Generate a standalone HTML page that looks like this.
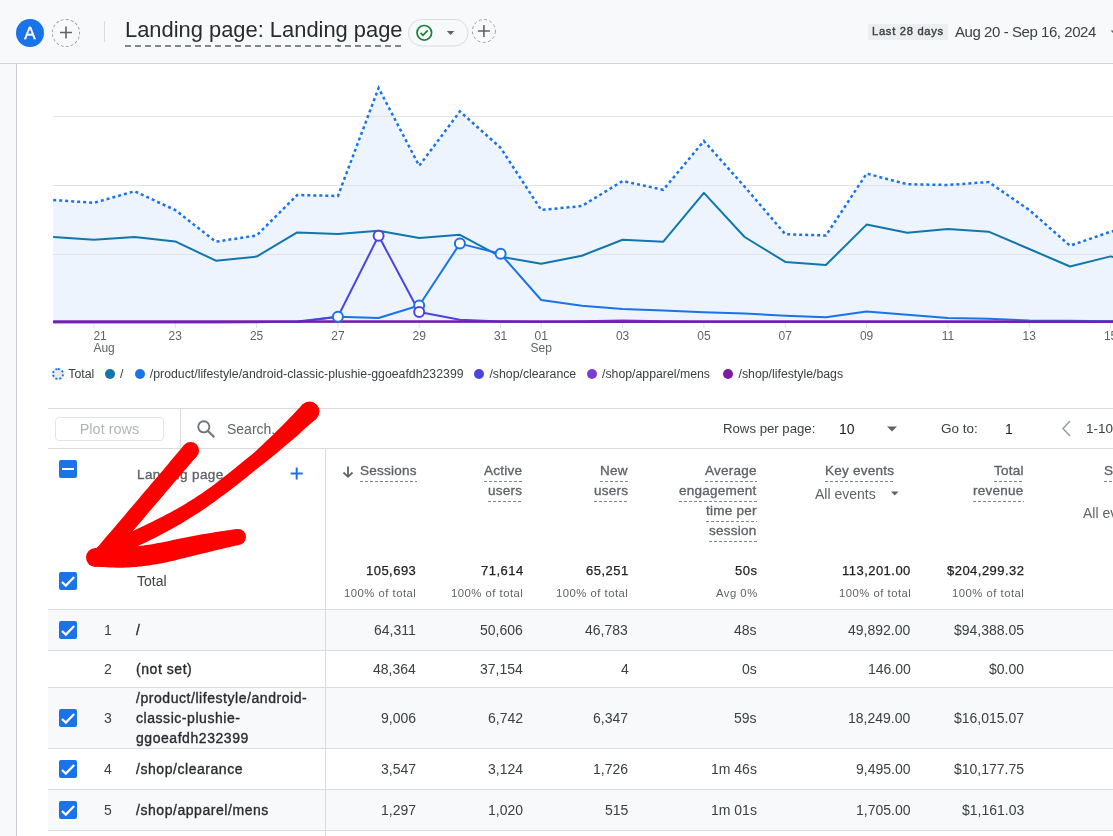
<!DOCTYPE html>
<html><head><meta charset="utf-8">
<style>
*{box-sizing:border-box;margin:0;padding:0}
html,body{width:1113px;height:836px;overflow:hidden;background:#fff;font-family:"Liberation Sans",sans-serif;color:#3c4043}
.a{position:absolute;white-space:nowrap;will-change:transform}
#hdr{position:absolute;left:0;top:0;width:1113px;height:64px;background:#f8f9fa;border-bottom:1px solid #d3d5d9}
#strip{position:absolute;left:0;top:64px;width:17px;height:772px;background:#f8f9fa;border-right:1px solid #c9ccd0}
.xl{position:absolute;width:60px;font-size:12px;line-height:12px;color:#5f6368}
.xl.c{text-align:center}
.lg{position:absolute;font-size:12.3px;line-height:14px;top:367px;color:#3c4043;white-space:nowrap}
.dot{position:absolute;width:10px;height:10px;border-radius:50%;top:369px}
.hd{position:absolute;font-size:13.2px;font-weight:bold;color:#5f6368;line-height:20px;text-align:right;white-space:nowrap}
.u{height:22px;background-image:linear-gradient(to right,#80868b 60%,transparent 60%);background-size:5px 1px;background-repeat:repeat-x;background-position:0 20px;}
.num{position:absolute;font-size:14px;line-height:20px;text-align:right;white-space:nowrap;color:#202124}
.sub{position:absolute;font-size:12px;line-height:16px;text-align:right;white-space:nowrap;color:#5f6368}
.cb{position:absolute;width:18px;height:18px;background:#1a73e8;border-radius:2px;left:59px}
.row{position:absolute;left:48px;width:1065px;border-bottom:1px solid #dadce0}
.m{-webkit-text-stroke:0.35px currentColor}
.pg{position:absolute;left:136px;font-size:14px;line-height:20px;font-weight:bold;color:#3c4043;white-space:nowrap}
.rn{position:absolute;width:30px;left:81px;text-align:right;font-size:14px;line-height:20px;color:#3c4043}
</style></head><body>
<div id="hdr"></div>
<div id="strip"></div>

<!-- header contents -->
<div class="a" style="left:16px;top:19px;width:28px;height:28px;border-radius:50%;background:#1a73e8;color:#fff;font-size:17px;line-height:29px;text-align:center;-webkit-text-stroke:0.4px #fff">A</div>
<div class="a" style="left:52px;top:18.5px;width:28px;height:28px;border-radius:50%;border:1px dashed #9aa0a6"></div>
<svg class="a" style="left:0;top:0" width="1113" height="64">
 <path d="M66,26.5 V38.5 M60,32.5 H72" stroke="#5f6368" stroke-width="1.6"/>
 <line x1="104.5" y1="21" x2="104.5" y2="42" stroke="#dadce0" stroke-width="1"/>
 <line x1="125" y1="46" x2="403" y2="46" stroke="#80868b" stroke-width="2" stroke-dasharray="6 4"/>
 <rect x="408.5" y="19.5" width="59.5" height="26.5" rx="13.25" fill="none" stroke="#dadce0"/>
 <circle cx="424.3" cy="32.8" r="7.3" fill="none" stroke="#188038" stroke-width="1.7"/>
 <path d="M420.5,32.8 L423,35.3 L427.7,30.4" fill="none" stroke="#188038" stroke-width="1.7"/>
 <path d="M446.8,31 L454.4,31 L450.6,35 Z" fill="#5f6368"/>
 <circle cx="483.9" cy="31" r="11.5" fill="none" stroke="#9aa0a6" stroke-dasharray="3 2.4"/>
 <path d="M483.9,25 V37 M477.9,31 H489.9" stroke="#5f6368" stroke-width="1.6"/>
 <path d="M1110.5,30.5 L1118.5,30.5 L1114.5,34.5 Z" fill="#5f6368"/>
</svg>
<div class="a" style="left:125px;top:17.1px;font-size:21.9px;line-height:26px;color:#2a2b2e">Landing page: Landing page</div>
<div class="a" style="left:868px;top:24px;width:79.5px;height:16px;background:#eceef0;border-radius:2px"></div>
<div class="a" style="left:872.4px;top:25px;font-size:11.2px;letter-spacing:0.7px;line-height:14px;color:#3c4043;top:23.6px;-webkit-text-stroke:0.4px #3c4043">Last 28 days</div>
<div class="a" style="left:954.7px;top:22px;font-size:15px;letter-spacing:-0.44px;line-height:20px;color:#3c4043">Aug 20 - Sep 16, 2024</div>

<!-- chart -->
<svg class="a" style="left:0;top:0" width="1113" height="400">
<path d="M53.2,322 L53.2,200.0 L93.9,202.8 L134.5,191.3 L175.2,210.0 L215.9,241.7 L256.6,235.5 L297.2,195.0 L337.9,196.0 L378.6,88.0 L419.2,165.8 L459.9,111.4 L500.6,147.8 L541.2,210.0 L581.9,206.0 L622.6,181.0 L663.3,189.8 L703.9,141.0 L744.6,186.6 L785.3,234.2 L825.9,235.5 L866.6,173.6 L907.3,184.2 L947.9,185.0 L988.6,182.0 L1029.3,210.0 L1070.0,245.7 L1110.6,231.7 L1151.3,222.0 L1151.3,322 Z" fill="#edf4fe"/>
<line x1="53" y1="116.5" x2="1113" y2="116.5" stroke="#e3e3e3" stroke-width="1"/>
<line x1="53" y1="185.5" x2="1113" y2="185.5" stroke="#e3e3e3" stroke-width="1"/>
<line x1="53" y1="254.5" x2="1113" y2="254.5" stroke="#e3e3e3" stroke-width="1"/>
<line x1="93.9" y1="323" x2="93.9" y2="328" stroke="#e0e0e0" stroke-width="1"/>
<line x1="175.2" y1="323" x2="175.2" y2="328" stroke="#e0e0e0" stroke-width="1"/>
<line x1="256.6" y1="323" x2="256.6" y2="328" stroke="#e0e0e0" stroke-width="1"/>
<line x1="337.9" y1="323" x2="337.9" y2="328" stroke="#e0e0e0" stroke-width="1"/>
<line x1="419.2" y1="323" x2="419.2" y2="328" stroke="#e0e0e0" stroke-width="1"/>
<line x1="500.6" y1="323" x2="500.6" y2="328" stroke="#e0e0e0" stroke-width="1"/>
<line x1="541.2" y1="323" x2="541.2" y2="328" stroke="#e0e0e0" stroke-width="1"/>
<line x1="622.6" y1="323" x2="622.6" y2="328" stroke="#e0e0e0" stroke-width="1"/>
<line x1="703.9" y1="323" x2="703.9" y2="328" stroke="#e0e0e0" stroke-width="1"/>
<line x1="785.3" y1="323" x2="785.3" y2="328" stroke="#e0e0e0" stroke-width="1"/>
<line x1="866.6" y1="323" x2="866.6" y2="328" stroke="#e0e0e0" stroke-width="1"/>
<line x1="947.9" y1="323" x2="947.9" y2="328" stroke="#e0e0e0" stroke-width="1"/>
<line x1="1029.3" y1="323" x2="1029.3" y2="328" stroke="#e0e0e0" stroke-width="1"/>
<line x1="1110.6" y1="323" x2="1110.6" y2="328" stroke="#e0e0e0" stroke-width="1"/>
<polyline points="53.2,321.6 93.9,321.6 134.5,321.6 175.2,321.6 215.9,321.6 256.6,321.6 297.2,321.6 337.9,321.6 378.6,321.6 419.2,321.6 459.9,321.6 500.6,321.6 541.2,321.6 581.9,321.2 622.6,320.6 663.3,321.2 703.9,321.6 744.6,321.6 785.3,321.6 825.9,321.6 866.6,321.6 907.3,321.6 947.9,321.6 988.6,321.6 1029.3,321.6 1070.0,321.6 1110.6,321.6 1151.3,321.6" fill="none" stroke="#7a3ad6" stroke-width="2"/>
<polyline points="53.2,237.0 93.9,239.8 134.5,237.0 175.2,241.4 215.9,260.7 256.6,256.6 297.2,232.4 337.9,234.0 378.6,230.8 419.2,238.0 459.9,234.8 500.6,256.6 541.2,263.8 581.9,255.7 622.6,239.8 663.3,241.7 703.9,192.9 744.6,237.0 785.3,261.9 825.9,265.0 866.6,224.6 907.3,232.7 947.9,229.0 988.6,231.7 1029.3,249.0 1070.0,266.5 1110.6,256.4 1151.3,266.0" fill="none" stroke="#1176ac" stroke-width="2" stroke-linejoin="round"/>
<polyline points="53.2,322.5 93.9,322.5 134.5,322.5 175.2,322.5 215.9,322.5 256.6,322.3 297.2,321.5 337.9,316.7 378.6,318.0 419.2,305.5 459.9,243.6 500.6,253.8 541.2,300.0 581.9,305.8 622.6,308.9 663.3,310.4 703.9,312.2 744.6,313.5 785.3,315.7 825.9,317.3 866.6,311.4 907.3,314.8 947.9,318.0 988.6,318.8 1029.3,320.4 1070.0,320.8 1110.6,321.2 1151.3,321.5" fill="none" stroke="#1a73e8" stroke-width="2" stroke-linejoin="round"/>
<polyline points="53.2,322.0 93.9,322.0 134.5,322.0 175.2,322.0 215.9,322.0 256.6,322.0 297.2,322.0 337.9,316.7 378.6,235.8 419.2,312.0 459.9,319.8 500.6,321.5 541.2,322.0 581.9,322.0 622.6,322.0 663.3,322.0 703.9,322.0 744.6,322.0 785.3,322.0 825.9,322.0 866.6,322.0 907.3,322.0 947.9,322.0 988.6,322.0 1029.3,322.0 1070.0,322.0 1110.6,322.0 1151.3,322.0" fill="none" stroke="#4b44e0" stroke-width="2" stroke-linejoin="round"/>
<polyline points="53.2,321.7 93.9,321.7 134.5,321.7 175.2,321.7 215.9,321.7 256.6,321.7 297.2,321.7 337.9,321.7 378.6,321.7 419.2,321.7 459.9,321.7 500.6,321.7 541.2,321.7 581.9,321.7 622.6,321.7 663.3,321.7 703.9,321.7 744.6,321.7 785.3,321.7 825.9,321.7 866.6,321.7 907.3,321.7 947.9,321.7 988.6,321.7 1029.3,321.7 1070.0,321.7 1110.6,321.7 1151.3,321.7" fill="none" stroke="#7d1aa0" stroke-width="2.2"/>
<polyline points="53.2,200.0 93.9,202.8 134.5,191.3 175.2,210.0 215.9,241.7 256.6,235.5 297.2,195.0 337.9,196.0 378.6,88.0 419.2,165.8 459.9,111.4 500.6,147.8 541.2,210.0 581.9,206.0 622.6,181.0 663.3,189.8 703.9,141.0 744.6,186.6 785.3,234.2 825.9,235.5 866.6,173.6 907.3,184.2 947.9,185.0 988.6,182.0 1029.3,210.0 1070.0,245.7 1110.6,231.7 1151.3,222.0" fill="none" stroke="#1a73e8" stroke-width="2.5" stroke-dasharray="3 3"/>
<circle cx="337.9" cy="316.7" r="5" fill="#fff" stroke="#1a73e8" stroke-width="2"/>
<circle cx="419.2" cy="305.5" r="5" fill="#fff" stroke="#1a73e8" stroke-width="2"/>
<circle cx="459.9" cy="243.6" r="5" fill="#fff" stroke="#1a73e8" stroke-width="2"/>
<circle cx="500.6" cy="253.8" r="5" fill="#fff" stroke="#1a73e8" stroke-width="2"/>
<circle cx="378.6" cy="235.8" r="5" fill="#fff" stroke="#4b44e0" stroke-width="2"/>
<circle cx="419.2" cy="312" r="5" fill="#fff" stroke="#4b44e0" stroke-width="2"/>
</svg>
<div class="xl" style="left:93.4px;top:329.5px;text-align:left">21<br>Aug</div>
<div class="xl c" style="left:145.2px;top:329.5px">23</div>
<div class="xl c" style="left:226.6px;top:329.5px">25</div>
<div class="xl c" style="left:307.9px;top:329.5px">27</div>
<div class="xl c" style="left:389.2px;top:329.5px">29</div>
<div class="xl c" style="left:470.6px;top:329.5px">31</div>
<div class="xl c" style="left:511.2px;top:329.5px">01<br>Sep</div>
<div class="xl c" style="left:592.6px;top:329.5px">03</div>
<div class="xl c" style="left:673.9px;top:329.5px">05</div>
<div class="xl c" style="left:755.3px;top:329.5px">07</div>
<div class="xl c" style="left:836.6px;top:329.5px">09</div>
<div class="xl c" style="left:917.9px;top:329.5px">11</div>
<div class="xl c" style="left:999.3px;top:329.5px">13</div>
<div class="xl c" style="left:1080.6px;top:329.5px">15</div>

<!-- legend -->
<div class="a" style="left:52px;top:368px;width:12px;height:12px;border-radius:50%;border:2px dotted #1a73e8;background:#e8eaed"></div>
<div class="lg" style="left:68.3px">Total</div>
<div class="dot" style="left:105px;background:#1176ac"></div>
<div class="lg" style="left:120px">/</div>
<div class="dot" style="left:135px;background:#1a73e8"></div>
<div class="lg" style="left:149.8px">/product/lifestyle/android-classic-plushie-ggoeafdh232399</div>
<div class="dot" style="left:474px;background:#4b44e0"></div>
<div class="lg" style="left:489.4px">/shop/clearance</div>
<div class="dot" style="left:587px;background:#7a3ad6"></div>
<div class="lg" style="left:602px">/shop/apparel/mens</div>
<div class="dot" style="left:723px;background:#7d1aa0"></div>
<div class="lg" style="left:738.5px">/shop/lifestyle/bags</div>

<!-- table toolbar -->
<div class="a" style="left:48px;top:408px;width:1065px;height:41px;border-top:1px solid #dadce0;border-bottom:1px solid #dadce0"></div>
<div class="a" style="left:54.5px;top:417px;width:109px;height:23.5px;border:1px solid #e3e5e8;border-radius:4px"></div>
<div class="a" style="left:54.5px;top:419px;width:109px;text-align:center;font-size:14.5px;line-height:20px;color:#b0b4b9">Plot rows</div>
<div class="a" style="left:180px;top:408px;width:1px;height:41px;background:#dadce0"></div>
<svg class="a" style="left:190px;top:412px" width="34" height="34">
 <circle cx="13.8" cy="14.8" r="5.6" fill="none" stroke="#70757a" stroke-width="1.9"/>
 <line x1="18" y1="19" x2="24.3" y2="25.3" stroke="#70757a" stroke-width="2"/>
</svg>
<div class="a" style="left:227px;top:419px;font-size:14px;line-height:20px;color:#5f6368">Search...</div>
<div class="a" style="left:723px;top:419px;font-size:13.2px;line-height:20px;color:#3c4043">Rows per page:</div>
<div class="a" style="left:839px;top:419px;font-size:14px;line-height:20px;color:#202124">10</div>
<svg class="a" style="left:880px;top:420px" width="20" height="20"><path d="M7,6.5 L17,6.5 L12,11.5 Z" fill="#5f6368"/></svg>
<div class="a" style="left:941px;top:419px;font-size:13.5px;line-height:20px;color:#3c4043">Go to:</div>
<div class="a" style="left:1005px;top:419px;font-size:14px;line-height:20px;color:#202124">1</div>
<svg class="a" style="left:1055px;top:418px" width="20" height="22"><path d="M15,3 L8,10.5 L15,18" fill="none" stroke="#9aa0a6" stroke-width="1.6"/></svg>
<div class="a" style="left:1085.7px;top:419px;font-size:13.5px;line-height:20px;color:#3c4043">1-10</div>

<!-- table header -->
<div class="cb" style="top:460px"><div style="position:absolute;left:3px;top:8px;width:12px;height:2px;background:#fff"></div></div>
<div class="a m" style="left:137px;top:465px;font-size:13.5px;line-height:20px;letter-spacing:0.4px;color:#5f6368">Landing page</div>
<svg class="a" style="left:288px;top:465px" width="18" height="18"><path d="M8.7,2.5 V14.5 M2.7,8.5 H14.7" stroke="#1a73e8" stroke-width="2"/></svg>

<svg class="a" style="left:340px;top:464.5px" width="16" height="14"><path d="M8,1.5 V11.5 M3.5,7.5 L8,11.8 L12.5,7.5" fill="none" stroke="#5f6368" stroke-width="1.8"/></svg>
<div class="a hl u m" style="right:696.7px;top:461.02px;font-size:13.5px;line-height:20px;font-weight:normal;color:#5f6368;letter-spacing:0.25px">Sessions</div>
<div class="a hl u m" style="right:590.7px;top:461.02px;font-size:13.5px;line-height:20px;font-weight:normal;color:#5f6368;letter-spacing:0.25px">Active</div>
<div class="a hl u m" style="right:590.7px;top:480.82px;font-size:13.5px;line-height:20px;font-weight:normal;color:#5f6368;letter-spacing:0.25px">users</div>
<div class="a hl u m" style="right:485.0px;top:461.02px;font-size:13.5px;line-height:20px;font-weight:normal;color:#5f6368;letter-spacing:0.25px">New</div>
<div class="a hl u m" style="right:485.0px;top:480.82px;font-size:13.5px;line-height:20px;font-weight:normal;color:#5f6368;letter-spacing:0.25px">users</div>
<div class="a hl u m" style="right:356.5px;top:461.02px;font-size:13.5px;line-height:20px;font-weight:normal;color:#5f6368;letter-spacing:0.25px">Average</div>
<div class="a hl u m" style="right:356.5px;top:480.82px;font-size:13.5px;line-height:20px;font-weight:normal;color:#5f6368;letter-spacing:0.25px">engagement</div>
<div class="a hl u m" style="right:356.5px;top:500.82px;font-size:13.5px;line-height:20px;font-weight:normal;color:#5f6368;letter-spacing:0.25px">time per</div>
<div class="a hl u m" style="right:356.5px;top:520.72px;font-size:13.5px;line-height:20px;font-weight:normal;color:#5f6368;letter-spacing:0.25px">session</div>
<div class="a hl u m" style="left:824.8px;top:461.02px;font-size:13.5px;line-height:20px;font-weight:normal;color:#5f6368;letter-spacing:0.25px">Key events</div>
<div class="a hl u m" style="right:89.6px;top:461.02px;font-size:13.5px;line-height:20px;font-weight:normal;color:#5f6368;letter-spacing:0.25px">Total</div>
<div class="a hl u m" style="right:89.6px;top:480.82px;font-size:13.5px;line-height:20px;font-weight:normal;color:#5f6368;letter-spacing:0.25px">revenue</div>
<div class="a hl u m" style="left:1103.6px;top:461.02px;font-size:13.5px;line-height:20px;font-weight:normal;color:#5f6368;letter-spacing:0.25px">S</div>
<div class="a" style="left:814.6px;top:483.5px;font-size:14px;line-height:20px;color:#5f6368">All events</div>
<svg class="a" style="left:888.5px;top:486.5px" width="14" height="14"><path d="M2,4.5 L9.5,4.5 L5.75,8.5 Z" fill="#5f6368"/></svg>
<div class="a" style="left:1083.3px;top:503px;font-size:14px;line-height:20px;color:#5f6368">All ev</div>

<!-- total row -->
<div class="cb" style="top:572px"><svg width="18" height="18" style="position:absolute;left:0;top:0"><path d="M3,10 L6.8,13.6 L15.2,5" fill="none" stroke="#fff" stroke-width="2.2"/></svg></div>
<div class="a" style="left:137px;top:571px;font-size:14px;line-height:20px;color:#3c4043">Total</div>
<div class="a " style="right:696.7px;top:561.35px;font-size:13px;line-height:20px;color:#202124;font-weight:normal;letter-spacing:0.47px;-webkit-text-stroke:0.25px #202124">105,693</div>
<div class="a " style="right:696.7px;top:582.83px;font-size:11.3px;line-height:20px;color:#5f6368;font-weight:normal;letter-spacing:0.49px;">100% of total</div>
<div class="a " style="right:589.7px;top:561.35px;font-size:13px;line-height:20px;color:#202124;font-weight:normal;letter-spacing:0.47px;-webkit-text-stroke:0.25px #202124">71,614</div>
<div class="a " style="right:589.7px;top:582.83px;font-size:11.3px;line-height:20px;color:#5f6368;font-weight:normal;letter-spacing:0.49px;">100% of total</div>
<div class="a " style="right:484.2px;top:561.35px;font-size:13px;line-height:20px;color:#202124;font-weight:normal;letter-spacing:0.47px;-webkit-text-stroke:0.25px #202124">65,251</div>
<div class="a " style="right:484.2px;top:582.83px;font-size:11.3px;line-height:20px;color:#5f6368;font-weight:normal;letter-spacing:0.49px;">100% of total</div>
<div class="a " style="right:355.8px;top:561.35px;font-size:13px;line-height:20px;color:#202124;font-weight:normal;letter-spacing:0.47px;-webkit-text-stroke:0.25px #202124">50s</div>
<div class="a " style="right:355.8px;top:582.83px;font-size:11.3px;line-height:20px;color:#5f6368;font-weight:normal;letter-spacing:0.49px;">Avg 0%</div>
<div class="a " style="right:201.9px;top:561.35px;font-size:13px;line-height:20px;color:#202124;font-weight:normal;letter-spacing:0.47px;-webkit-text-stroke:0.25px #202124">113,201.00</div>
<div class="a " style="right:201.9px;top:582.83px;font-size:11.3px;line-height:20px;color:#5f6368;font-weight:normal;letter-spacing:0.49px;">100% of total</div>
<div class="a " style="right:88.3px;top:561.35px;font-size:13px;line-height:20px;color:#202124;font-weight:normal;letter-spacing:0.47px;-webkit-text-stroke:0.25px #202124">$204,299.32</div>
<div class="a " style="right:88.3px;top:582.83px;font-size:11.3px;line-height:20px;color:#5f6368;font-weight:normal;letter-spacing:0.49px;">100% of total</div>
<div class="a" style="left:48px;top:449px;width:1065px;height:161px;border-bottom:1px solid #dadce0"></div>
<div class="a" style="left:48px;top:610px;width:1065px;height:41px;background:#f8f9fa;border-bottom:1px solid #dadce0"></div>
<div class="cb" style="top:621.0px"><svg width="18" height="18" style="position:absolute;left:0;top:0"><path d="M3,10 L6.8,13.6 L15.2,5" fill="none" stroke="#fff" stroke-width="2.2"/></svg></div>
<div class="a " style="right:1001.4px;top:620.16px;font-size:14px;line-height:20px;color:#3c4043;font-weight:normal;letter-spacing:0px;">1</div>
<div class="a m" style="left:136px;top:620.16px;font-size:14px;line-height:20px;color:#2a2c30;letter-spacing:0.55px">/</div>
<div class="a " style="right:697.2px;top:620.16px;font-size:14px;line-height:20px;color:#3c4043;font-weight:normal;letter-spacing:0px;">64,311</div>
<div class="a " style="right:590.2px;top:620.16px;font-size:14px;line-height:20px;color:#3c4043;font-weight:normal;letter-spacing:0px;">50,606</div>
<div class="a " style="right:484.7px;top:620.16px;font-size:14px;line-height:20px;color:#3c4043;font-weight:normal;letter-spacing:0px;">46,783</div>
<div class="a " style="right:356.3px;top:620.16px;font-size:14px;line-height:20px;color:#3c4043;font-weight:normal;letter-spacing:0px;">48s</div>
<div class="a " style="right:202.4px;top:620.16px;font-size:14px;line-height:20px;color:#3c4043;font-weight:normal;letter-spacing:0px;">49,892.00</div>
<div class="a " style="right:88.8px;top:620.16px;font-size:14px;line-height:20px;color:#3c4043;font-weight:normal;letter-spacing:0px;">$94,388.05</div>
<div class="a" style="left:48px;top:651px;width:1065px;height:37px;background:#fff;border-bottom:1px solid #dadce0"></div>
<div class="a " style="right:1001.4px;top:659.16px;font-size:14px;line-height:20px;color:#3c4043;font-weight:normal;letter-spacing:0px;">2</div>
<div class="a m" style="left:136px;top:659.16px;font-size:14px;line-height:20px;color:#2a2c30;letter-spacing:0.55px">(not set)</div>
<div class="a " style="right:697.2px;top:659.16px;font-size:14px;line-height:20px;color:#3c4043;font-weight:normal;letter-spacing:0px;">48,364</div>
<div class="a " style="right:590.2px;top:659.16px;font-size:14px;line-height:20px;color:#3c4043;font-weight:normal;letter-spacing:0px;">37,154</div>
<div class="a " style="right:484.7px;top:659.16px;font-size:14px;line-height:20px;color:#3c4043;font-weight:normal;letter-spacing:0px;">4</div>
<div class="a " style="right:356.3px;top:659.16px;font-size:14px;line-height:20px;color:#3c4043;font-weight:normal;letter-spacing:0px;">0s</div>
<div class="a " style="right:202.4px;top:659.16px;font-size:14px;line-height:20px;color:#3c4043;font-weight:normal;letter-spacing:0px;">146.00</div>
<div class="a " style="right:88.8px;top:659.16px;font-size:14px;line-height:20px;color:#3c4043;font-weight:normal;letter-spacing:0px;">$0.00</div>
<div class="a" style="left:48px;top:688px;width:1065px;height:61px;background:#f8f9fa;border-bottom:1px solid #dadce0"></div>
<div class="cb" style="top:709.0px"><svg width="18" height="18" style="position:absolute;left:0;top:0"><path d="M3,10 L6.8,13.6 L15.2,5" fill="none" stroke="#fff" stroke-width="2.2"/></svg></div>
<div class="a " style="right:1001.4px;top:708.16px;font-size:14px;line-height:20px;color:#3c4043;font-weight:normal;letter-spacing:0px;">3</div>
<div class="a m" style="left:136px;top:688.16px;font-size:14px;line-height:20px;color:#2a2c30;letter-spacing:0.55px">/product/lifestyle/android-<br>classic-plushie-<br>ggoeafdh232399</div>
<div class="a " style="right:697.2px;top:708.16px;font-size:14px;line-height:20px;color:#3c4043;font-weight:normal;letter-spacing:0px;">9,006</div>
<div class="a " style="right:590.2px;top:708.16px;font-size:14px;line-height:20px;color:#3c4043;font-weight:normal;letter-spacing:0px;">6,742</div>
<div class="a " style="right:484.7px;top:708.16px;font-size:14px;line-height:20px;color:#3c4043;font-weight:normal;letter-spacing:0px;">6,347</div>
<div class="a " style="right:356.3px;top:708.16px;font-size:14px;line-height:20px;color:#3c4043;font-weight:normal;letter-spacing:0px;">59s</div>
<div class="a " style="right:202.4px;top:708.16px;font-size:14px;line-height:20px;color:#3c4043;font-weight:normal;letter-spacing:0px;">18,249.00</div>
<div class="a " style="right:88.8px;top:708.16px;font-size:14px;line-height:20px;color:#3c4043;font-weight:normal;letter-spacing:0px;">$16,015.07</div>
<div class="a" style="left:48px;top:749px;width:1065px;height:41px;background:#fff;border-bottom:1px solid #dadce0"></div>
<div class="cb" style="top:760.0px"><svg width="18" height="18" style="position:absolute;left:0;top:0"><path d="M3,10 L6.8,13.6 L15.2,5" fill="none" stroke="#fff" stroke-width="2.2"/></svg></div>
<div class="a " style="right:1001.4px;top:759.16px;font-size:14px;line-height:20px;color:#3c4043;font-weight:normal;letter-spacing:0px;">4</div>
<div class="a m" style="left:136px;top:759.16px;font-size:14px;line-height:20px;color:#2a2c30;letter-spacing:0.55px">/shop/clearance</div>
<div class="a " style="right:697.2px;top:759.16px;font-size:14px;line-height:20px;color:#3c4043;font-weight:normal;letter-spacing:0px;">3,547</div>
<div class="a " style="right:590.2px;top:759.16px;font-size:14px;line-height:20px;color:#3c4043;font-weight:normal;letter-spacing:0px;">3,124</div>
<div class="a " style="right:484.7px;top:759.16px;font-size:14px;line-height:20px;color:#3c4043;font-weight:normal;letter-spacing:0px;">1,726</div>
<div class="a " style="right:356.3px;top:759.16px;font-size:14px;line-height:20px;color:#3c4043;font-weight:normal;letter-spacing:0px;">1m 46s</div>
<div class="a " style="right:202.4px;top:759.16px;font-size:14px;line-height:20px;color:#3c4043;font-weight:normal;letter-spacing:0px;">9,495.00</div>
<div class="a " style="right:88.8px;top:759.16px;font-size:14px;line-height:20px;color:#3c4043;font-weight:normal;letter-spacing:0px;">$10,177.75</div>
<div class="a" style="left:48px;top:790px;width:1065px;height:41px;background:#f8f9fa;border-bottom:1px solid #dadce0"></div>
<div class="cb" style="top:801.0px"><svg width="18" height="18" style="position:absolute;left:0;top:0"><path d="M3,10 L6.8,13.6 L15.2,5" fill="none" stroke="#fff" stroke-width="2.2"/></svg></div>
<div class="a " style="right:1001.4px;top:800.16px;font-size:14px;line-height:20px;color:#3c4043;font-weight:normal;letter-spacing:0px;">5</div>
<div class="a m" style="left:136px;top:800.16px;font-size:14px;line-height:20px;color:#2a2c30;letter-spacing:0.55px">/shop/apparel/mens</div>
<div class="a " style="right:697.2px;top:800.16px;font-size:14px;line-height:20px;color:#3c4043;font-weight:normal;letter-spacing:0px;">1,297</div>
<div class="a " style="right:590.2px;top:800.16px;font-size:14px;line-height:20px;color:#3c4043;font-weight:normal;letter-spacing:0px;">1,020</div>
<div class="a " style="right:484.7px;top:800.16px;font-size:14px;line-height:20px;color:#3c4043;font-weight:normal;letter-spacing:0px;">515</div>
<div class="a " style="right:356.3px;top:800.16px;font-size:14px;line-height:20px;color:#3c4043;font-weight:normal;letter-spacing:0px;">1m 01s</div>
<div class="a " style="right:202.4px;top:800.16px;font-size:14px;line-height:20px;color:#3c4043;font-weight:normal;letter-spacing:0px;">1,705.00</div>
<div class="a " style="right:88.8px;top:800.16px;font-size:14px;line-height:20px;color:#3c4043;font-weight:normal;letter-spacing:0px;">$1,161.03</div>
<div class="a" style="left:325px;top:449px;width:1px;height:387px;background:#dadce0"></div>

<svg class="a" style="left:0;top:0" width="1113" height="836" fill="#ff0000">
<path d="M302.6,404.3 L300.8,406.2 L298.5,408.8 L295.7,411.7 L292.6,415.0 L289.2,418.5 L285.8,422.0 L282.4,425.5 L279.1,428.7 L276.0,431.8 L272.8,434.9 L269.7,438.0 L266.4,441.1 L263.1,444.3 L259.6,447.5 L255.9,450.9 L251.9,454.4 L247.4,458.1 L242.5,462.1 L237.4,466.3 L232.1,470.5 L226.8,474.7 L221.6,478.7 L216.8,482.5 L212.3,485.9 L208.3,488.8 L204.5,491.5 L201.0,493.9 L197.7,496.1 L194.5,498.2 L191.2,500.3 L187.9,502.3 L184.5,504.4 L181.0,506.5 L177.5,508.5 L173.9,510.5 L170.4,512.4 L166.8,514.3 L163.2,516.2 L159.6,518.0 L156.0,519.8 L152.4,521.7 L148.7,523.5 L145.0,525.2 L141.3,527.0 L137.6,528.7 L133.9,530.4 L130.2,532.1 L126.6,533.7 L123.0,535.4 L119.2,537.1 L115.3,538.9 L111.4,540.6 L107.8,542.2 L104.6,543.6 L101.9,544.8 L99.8,545.7 L106.2,560.3 L108.3,559.4 L111.0,558.2 L114.2,556.8 L117.9,555.2 L121.7,553.5 L125.7,551.7 L129.6,550.0 L133.4,548.3 L136.9,546.6 L140.6,544.8 L144.3,543.0 L148.1,541.2 L151.9,539.3 L155.7,537.5 L159.4,535.5 L163.2,533.6 L166.8,531.6 L170.5,529.6 L174.1,527.6 L177.7,525.5 L181.3,523.4 L184.9,521.2 L188.5,519.0 L192.1,516.8 L195.6,514.6 L199.0,512.4 L202.3,510.2 L205.7,507.9 L209.1,505.5 L212.7,503.0 L216.5,500.2 L220.7,497.1 L225.3,493.7 L230.3,489.9 L235.5,485.9 L240.9,481.7 L246.3,477.5 L251.5,473.3 L256.5,469.3 L261.1,465.6 L265.4,462.2 L269.4,459.0 L273.2,455.9 L276.9,452.9 L280.4,449.9 L283.8,447.1 L287.2,444.2 L290.7,441.3 L294.3,438.2 L298.0,434.9 L301.8,431.6 L305.4,428.3 L308.8,425.3 L311.9,422.6 L314.4,420.4 L316.4,418.7 Z"/><circle cx="309.5" cy="411.5" r="10.0"/><circle cx="103.0" cy="553.0" r="8.0"/><path d="M184.1,444.9 L182.4,447.0 L180.1,449.7 L177.4,452.9 L174.4,456.5 L171.2,460.3 L168.0,464.2 L164.8,468.0 L161.9,471.5 L159.1,474.8 L156.3,478.0 L153.5,481.3 L150.7,484.6 L147.9,487.9 L145.0,491.2 L142.2,494.6 L139.4,497.9 L136.6,501.2 L133.8,504.5 L131.0,507.8 L128.2,511.1 L125.4,514.4 L122.6,517.7 L119.8,521.0 L117.0,524.3 L114.1,527.7 L110.9,531.5 L107.6,535.3 L104.4,539.1 L101.3,542.7 L98.6,545.9 L96.3,548.6 L94.5,550.6 L107.1,561.4 L108.8,559.3 L111.1,556.6 L113.9,553.4 L116.9,549.8 L120.2,546.0 L123.4,542.2 L126.6,538.4 L129.6,534.9 L132.4,531.6 L135.2,528.3 L138.0,525.0 L140.8,521.7 L143.6,518.4 L146.4,515.1 L149.2,511.8 L152.0,508.5 L154.8,505.2 L157.6,502.0 L160.4,498.7 L163.2,495.4 L166.0,492.1 L168.9,488.8 L171.7,485.4 L174.5,482.1 L177.5,478.7 L180.7,475.0 L184.0,471.1 L187.2,467.4 L190.3,463.8 L193.0,460.6 L195.3,457.9 L197.1,455.9 Z"/><circle cx="190.6" cy="450.4" r="8.5"/><circle cx="100.8" cy="556.0" r="8.2"/><path d="M236.6,529.1 L235.2,529.3 L233.4,529.5 L231.2,529.8 L228.7,530.2 L226.1,530.5 L223.5,530.9 L220.8,531.3 L218.3,531.7 L215.9,532.1 L213.5,532.5 L211.0,532.9 L208.5,533.3 L206.0,533.7 L203.5,534.1 L201.0,534.6 L198.4,535.0 L195.9,535.5 L193.3,536.0 L190.7,536.5 L188.1,537.0 L185.5,537.5 L182.9,538.0 L180.4,538.5 L177.8,539.0 L175.3,539.6 L172.7,540.1 L170.2,540.7 L167.7,541.2 L165.3,541.7 L162.9,542.2 L160.5,542.7 L158.1,543.1 L155.7,543.6 L153.3,544.0 L150.9,544.4 L148.5,544.7 L146.1,545.1 L143.7,545.4 L141.2,545.7 L138.8,546.0 L136.4,546.3 L134.0,546.6 L131.7,546.9 L129.4,547.1 L127.1,547.3 L124.7,547.5 L122.2,547.7 L119.7,547.8 L116.9,548.0 L113.7,548.1 L110.3,548.2 L106.9,548.3 L103.6,548.4 L100.6,548.4 L98.0,548.5 L96.1,548.6 L95.9,566.6 L97.7,566.8 L100.2,566.9 L103.2,567.1 L106.6,567.3 L110.1,567.5 L113.7,567.6 L117.1,567.7 L120.3,567.8 L123.1,567.7 L125.9,567.6 L128.5,567.5 L131.1,567.3 L133.6,567.1 L136.1,566.9 L138.6,566.6 L141.2,566.4 L143.8,566.1 L146.3,565.7 L148.9,565.4 L151.5,565.0 L154.1,564.6 L156.7,564.2 L159.3,563.7 L161.9,563.3 L164.5,562.7 L167.1,562.2 L169.7,561.6 L172.2,561.0 L174.7,560.4 L177.2,559.7 L179.7,559.1 L182.2,558.6 L184.7,557.9 L187.2,557.3 L189.8,556.7 L192.3,556.0 L194.9,555.4 L197.4,554.8 L199.9,554.2 L202.4,553.6 L204.8,553.0 L207.3,552.4 L209.7,551.8 L212.2,551.2 L214.6,550.6 L217.0,550.0 L219.3,549.4 L221.7,548.9 L224.1,548.3 L226.6,547.8 L229.2,547.2 L231.7,546.6 L234.1,546.1 L236.3,545.6 L238.1,545.2 L239.4,544.9 Z"/><circle cx="238.0" cy="537.0" r="8.0"/><circle cx="96.0" cy="557.6" r="9.0"/><circle cx="95.5" cy="557.5" r="9.5"/>
</svg>
</body></html>
